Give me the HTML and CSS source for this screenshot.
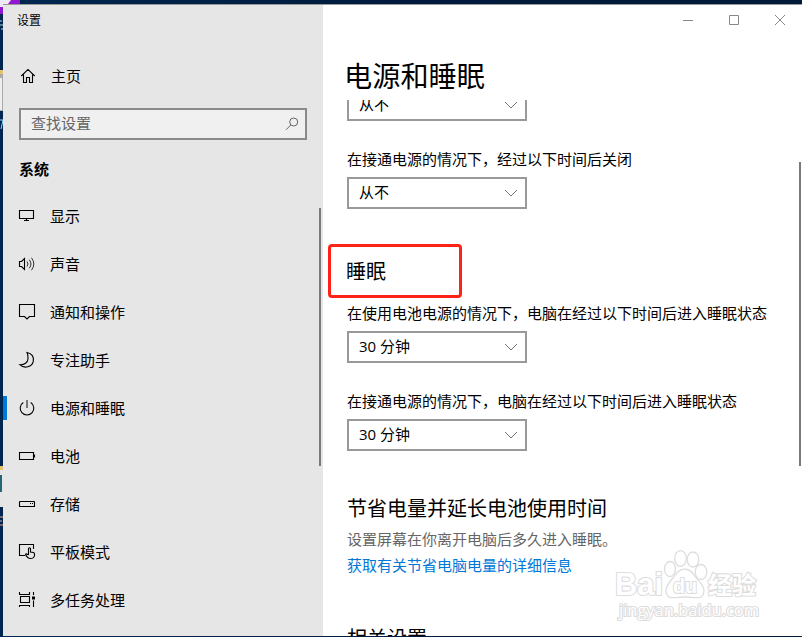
FILE: index.html
```html
<!DOCTYPE html>
<html lang="zh-CN">
<head>
<meta charset="utf-8">
<title>设置</title>
<link rel="stylesheet" href="styles.css">
</head>
<body>
<svg class="desktop" width="802" height="637" viewBox="0 0 802 637" aria-hidden="true">
  <path d="M0 0H20V4H3V14H0Z" fill="#9217d2"/><path d="M0 0H11L8 4H3V7H0Z" fill="#eee9f4"/>
  <path d="M0 21H2M0 25H3M1 29H3" stroke="#b7ded2"/>
  <path d="M0 70H3V111H0Z" fill="#aaa"/><path d="M0 70H3V74H0Z" fill="#e4c36c"/><path d="M0 78H2V110H0Z" fill="#eee"/>
  <path d="M0 120H3L1 129" stroke="#8ed9f3" fill="none"/>
  <path d="M0 466H3V507H0Z" fill="#e5e5e5"/><path d="M0 466H3V470H0Z" fill="#e4c36c"/><path d="M0 475H2V492H0Z" fill="#286578"/>
  <path d="M0 517H3M0 521H2M0 525H3" stroke="#e9a28a"/>
</svg>
<div class="window">
  <aside class="sidebar">
    <div class="app-name">设置</div>
    <div class="home">
      <svg class="icon" viewBox="0 0 18 18"><path d="M2.3 9 9 2.4 15.7 9M4.5 7.5V15.5H7.5V10.5H10.5V15.5H13.5V7.5"/></svg>
      <span>主页</span>
    </div>
    <div class="search">
      <span>查找设置</span>
      <svg width="14" height="14" viewBox="0 0 14 14"><circle cx="8.7" cy="5" r="4"/><path d="M5.8 8 1 12.8"/></svg>
    </div>
    <h2 class="group">系统</h2>
    <nav>
      <div class="item"><svg class="icon" viewBox="0 0 18 18"><path d="M1.5 3.5H15.5V11.5H1.5ZM8.5 11.5V13.5M6 13.5H11"/></svg><span>显示</span></div>
      <div class="item"><svg class="icon" viewBox="0 0 18 18"><path d="M1.5 6.5H3.5L6.500 3.500V14.500L3.500 11.500H1.500Z"/><path class="thin" d="M9 6.500Q11 9 9 11.500M11.300 4.700Q14.600 9 11.300 13.300M13.500 2.800Q18.200 9 13.500 15.200"/></svg><span>声音</span></div>
      <div class="item"><svg class="icon" viewBox="0 0 18 18"><path d="M1.500 1.500H16.500V13.500H11.500L9 16 6.500 13.500H1.500Z"/></svg><span>通知和操作</span></div>
      <div class="item"><svg class="icon" viewBox="0 0 18 18"><path d="M9 1.500C14 2.500 16.200 6 15.300 10.300C14 16 6.500 18.200 1.800 13.700C6.500 14 9.700 11.500 10 8C10.200 5.200 9.800 3 9 1.500Z"/></svg><span>专注助手</span></div>
      <div class="item current"><svg class="icon" viewBox="0 0 18 18"><path d="M5.300 3.500A6.800 6.800 0 1 0 12.700 3.500"/><path class="stem" d="M9 1V9"/></svg><span>电源和睡眠</span></div>
      <div class="item"><svg class="icon low" viewBox="0 0 18 18"><path d="M1.500 4.500H15.500V11.500H1.500ZM16.500 6.500V9.500"/></svg><span>电池</span></div>
      <div class="item"><svg class="icon low" viewBox="0 0 18 18"><path d="M2 5.500H16L16.500 6V10.500H1.500V6ZM12 7.500H13M14 7.500H15"/></svg><span>存储</span></div>
      <div class="item"><svg class="icon" viewBox="0 0 18 18"><path d="M7 12.500H1.500V1.500H15.500V6M10.500 12V5.500Q11.500 4 12.500 5.500V9L15.500 9.500Q16.500 10 16.500 11V12.500Q16 15.500 12.500 15.500Q9.500 15.500 7.500 11.500Q8 10 10.500 12"/></svg><span>平板模式</span></div>
      <div class="item"><svg class="icon" viewBox="0 0 18 18"><path d="M2.500 5.500H11.500V11.500H2.500ZM1.500 1V3.500H11.500V1M1.500 16V14.500H11.500V16M15.500 1V4M15.500 9.500V16"/><path class="dot" d="M14 5.500H17V8.500H14Z"/></svg><span>多任务处理</span></div>
    </nav>
    <div class="side-thumb"></div>
  </aside>
  <main>
    <div class="controls">
      <svg width="102" height="12" viewBox="0 0 102 12"><path d="M0 6.500H10M46.500 1.500H55.500V10.500H46.500ZM92 1 102 11M102 1 92 11"/></svg>
    </div>
    <h1>电源和睡眠</h1>
    <div class="scroller">
      <div class="select clipped"><span>从不</span><svg class="chevron" viewBox="0 0 14 8"><path d="M1 1 7 7 13 1"/></svg></div>
      <p class="label">在接通电源的情况下，经过以下时间后关闭</p>
      <div class="select"><span>从不</span><svg class="chevron" viewBox="0 0 14 8"><path d="M1 1 7 7 13 1"/></svg></div>
      <h2 class="sleep"><span>睡眠</span></h2>
      <p class="label first">在使用电池电源的情况下，电脑在经过以下时间后进入睡眠状态</p>
      <div class="select"><span>30 分钟</span><svg class="chevron" viewBox="0 0 14 8"><path d="M1 1 7 7 13 1"/></svg></div>
      <p class="label">在接通电源的情况下，电脑在经过以下时间后进入睡眠状态</p>
      <div class="select"><span>30 分钟</span><svg class="chevron" viewBox="0 0 14 8"><path d="M1 1 7 7 13 1"/></svg></div>
      <h2 class="saving">节省电量并延长电池使用时间</h2>
      <p class="hint">设置屏幕在你离开电脑后多久进入睡眠。</p>
      <a class="link">获取有关节省电脑电量的详细信息</a>
      <h2 class="related">相关设置</h2>
    </div>
    <div class="page-thumb"></div>
  </main>
</div>
<svg class="watermark" width="160" height="80" viewBox="0 0 160 80">
  <g class="latin"><text x="2" y="48" font-size="32" textLength="48" lengthAdjust="spacingAndGlyphs">Bai</text></g>
  <path d="M63 27C69 20 77 21 81 28C84 33 91 37 91 44C90 54 82 50 72 50C62 50 54 54 53 44C53 37 59 33 63 27Z"/>
  <ellipse cx="57" cy="22" rx="5.500" ry="7.500"/><ellipse cx="67.500" cy="11.500" rx="5.800" ry="7.800"/><ellipse cx="80" cy="12.500" rx="5.800" ry="7.500"/><ellipse cx="88" cy="25" rx="5.800" ry="7.500"/>
  <g class="latin"><text x="60" y="46" font-size="21" textLength="24" lengthAdjust="spacingAndGlyphs">du</text></g>
  <text class="cjk" x="95" y="47" font-size="24" textLength="48">经验</text>
  <text class="url" x="6" y="69" font-size="16" textLength="140" lengthAdjust="spacingAndGlyphs">jingyan.baidu.com</text>
</svg>
</body>
</html>
```
FILE: styles.css
```css
* { box-sizing: border-box; }
body {
  margin: 0;
  width: 802px;
  height: 637px;
  overflow: hidden;
  padding: 4px 0 1px 3px;
  background: linear-gradient(90deg, #002650, #001b3c 50%, #001a38);
  font: 15px/20px "Open Sans", "Noto Sans CJK SC", sans-serif;
  color: #000;
}
h1, h2, p { margin: 0; font-weight: 400; }
svg { flex: none; fill: none; }
.desktop { position: absolute; left: 0; top: 0; }
.window {
  position: relative;
  display: flex;
  height: 632px;
  border-top: 1px solid #999;
  background: #fff;
}
.sidebar {
  position: relative;
  width: 320px;
  background: #e6e6e6;
  overflow: hidden;
}
.app-name { height: 30px; padding: 6px 0 0 14px; font-size: 12px; }
.home, .item { display: flex; align-items: center; height: 48px; padding-left: 15px; }
.home { height: 40px; margin-top: 21px; padding-left: 16px; }
.icon { width: 18px; height: 18px; margin-right: 14px; stroke: #000; stroke-width: 1.1; }
.low { margin-top: 2px; }
.thin { stroke: #333; stroke-width: 1; }
.stem { stroke: #777; stroke-width: 2; }
.dot { fill: #000; stroke: none; }
.search {
  display: flex;
  align-items: center;
  justify-content: space-between;
  width: 288px;
  height: 32px;
  margin: 12px 0 0 16px;
  padding: 0 6px 2px 10px;
  border: 2px solid #8a8a8a;
  background: #f0f0f0;
  color: #666;
}
.search svg { margin-top: 2px; stroke: #666; }
.group { margin: 19px 0 13px 16px; font-size: 15px; font-weight: 700; }
.item.current { background: linear-gradient(#0078d7, #0078d7) 0 50% / 4px 24px no-repeat; }
.side-thumb {
  position: absolute;
  right: 2px;
  top: 203px;
  width: 2px;
  height: 258px;
  background: #7a7a7a;
}
main { position: relative; flex: 1; min-width: 0; padding-left: 24px; }
.controls { display: flex; justify-content: flex-end; height: 50px; padding: 9px 17px 0 0; }
.controls svg { stroke: #888; }
h1 { height: 45px; margin-left: -3px; font-size: 28.2px; line-height: 43px; }
.scroller { height: 536px; overflow: hidden; margin-left: -24px; padding-left: 24px; }
.select {
  display: flex;
  align-items: center;
  justify-content: space-between;
  width: 180px;
  height: 32px;
  padding: 0 7px 2px 10px;
  border: 2px solid #999;
}
.clipped { margin-top: -11px; }
.chevron { width: 14px; height: 8px; margin-top: 2px; stroke: #777; }
.label { margin: 28px 0 8px; }
.sleep {
  display: flex;
  align-items: center;
  width: 134px;
  height: 54px;
  margin: 35px 0 0 -19px;
  padding: 2px 0 0 15px;
  border: 3px solid #ff2317;
  border-radius: 4px;
  font-size: 20px;
}
.label.first { margin-top: 5px; }
.saving, .related { font-size: 20px; line-height: 28px; }
.saving { margin-top: 44px; }
.hint { margin-top: 6px; color: #666; }
.link { display: block; margin-top: 6px; color: #0078d7; }
.related { margin-top: 50px; }
.page-thumb { position: absolute; right: 1px; top: 157px; width: 2px; height: 304px; background: #7a7a7a; }
.watermark {
  position: absolute;
  left: 613px;
  top: 547px;
  fill: #fff;
  stroke: #ddd;
  stroke-width: 1.3;
}
.watermark text { paint-order: stroke; stroke-width: 2.2; }
.latin { font-family: "Liberation Sans", sans-serif; font-weight: 700; }
.cjk { font-family: "Noto Sans CJK SC", sans-serif; font-weight: 700; }
.url { font-family: "Open Sans", sans-serif; }
```
